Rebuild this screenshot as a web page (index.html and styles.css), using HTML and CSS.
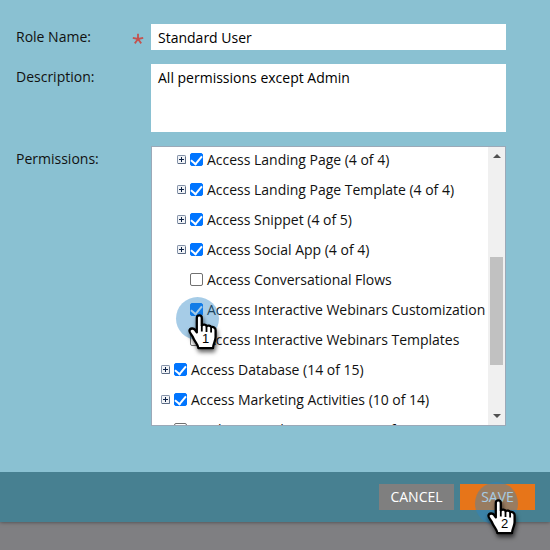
FILE: index.html
```
<!DOCTYPE html>
<html lang="en">
<head>
<meta charset="utf-8">
<title>Edit Role</title>
<link rel="stylesheet" href="styles.css">
</head>
<body>
<svg class="defs" width="0" height="0">
  <symbol id="plus" viewBox="0 0 9 9">
    <rect x=".5" y=".5" width="8" height="8" rx=".6" fill="#f1f3f6" stroke="#8492a8"/>
    <path d="M1 8.5H8.5V2" fill="none" stroke="#5c6c86"/>
    <path d="M2 4.5H7M4.5 2V7" stroke="#0d2348" stroke-width="1"/>
  </symbol>
  <symbol id="hand" viewBox="0 0 29 39">
    <path d="M8.8 4C8.8 .6 13.8 .6 13.8 4V11.4C15 10 18.2 10.4 18.6 12.2C19.8 11 22.6 11.6 23.2 13.2C25 12.4 27.6 13.6 27.6 16V23C27.6 27.6 25.2 29 25 34.2H10.4C10.2 30.4 6.6 27.8 5.2 23.8C4 20.8 1.4 19 1.4 16.8C1.8 13.8 5.8 14 7 15.8L8.8 18.4Z" fill="#fff" stroke="#000" stroke-width="2.3" stroke-linejoin="round"/>
    <path d="M13.8 11V17.4M18.5 12.4V18M23.1 13.4V18.6" stroke="#000" stroke-width="1.8"/>
  </symbol>
</svg>
<main class="dialog">
  <div class="form">
    <div class="field name">
      <label>Role Name:</label>
      <svg class="required" viewBox="0 0 12 12"><path d="M6 6V.8M6 6L11.2 4.9M6 6L9.2 10.4M6 6L2.8 10.4M6 6L.8 4.9" stroke="#c4524f" stroke-width="1.8"/></svg>
      <div class="input">Standard User</div>
    </div>
    <div class="field description">
      <label>Description:</label>
      <div class="input">All permissions except Admin</div>
    </div>
    <div class="field permissions">
      <label>Permissions:</label>
      <div class="tree">
        <div class="rows">
          <div class="row sub"><svg class="plus"><use href="#plus"/></svg><i class="box on"></i><span>Access Landing Page (4 of 4)</span></div>
          <div class="row sub"><svg class="plus"><use href="#plus"/></svg><i class="box on"></i><span>Access Landing Page Template (4 of 4)</span></div>
          <div class="row sub"><svg class="plus"><use href="#plus"/></svg><i class="box on"></i><span>Access Snippet (4 of 5)</span></div>
          <div class="row sub"><svg class="plus"><use href="#plus"/></svg><i class="box on"></i><span>Access Social App (4 of 4)</span></div>
          <div class="row sub"><b class="plus"></b><i class="box"></i><span>Access Conversational Flows</span></div>
          <div class="row sub"><b class="plus"></b><i class="box on"></i><span>Access Interactive Webinars Customization</span></div>
          <div class="row sub"><b class="plus"></b><i class="box"></i><span>Access Interactive Webinars Templates</span></div>
          <div class="row"><svg class="plus"><use href="#plus"/></svg><i class="box on"></i><span>Access Database (14 of 15)</span></div>
          <div class="row"><svg class="plus"><use href="#plus"/></svg><i class="box on"></i><span>Access Marketing Activities (10 of 14)</span></div>
          <div class="row"><b class="plus"></b><i class="box"></i><span>Workspace Administration (0 of 5)</span></div>
        </div>
        <div class="scrollbar">
          <svg class="arrow" viewBox="0 0 8 4"><path d="M0 4L4 0L8 4Z"/></svg>
          <div class="thumb"></div>
          <svg class="arrow" viewBox="0 0 8 4"><path d="M0 0L4 4L8 0Z"/></svg>
        </div>
      </div>
    </div>
  </div>
  <footer class="footer">
    <div class="button">CANCEL</div>
    <div class="button save">SAVE</div>
  </footer>
</main>
<div class="step first"><svg><use href="#hand"/></svg><span>1</span></div>
<div class="step second"><svg><use href="#hand"/></svg><span>2</span></div>
</body>
</html>
```
FILE: styles.css
```
* { box-sizing: border-box; }
body { margin: 0; width: 550px; height: 550px; overflow: hidden; position: relative; background: #7f7f82; font: 14px/20px "Open Sans", sans-serif; color: #111; }
.defs { position: absolute; }
.dialog { height: 522px; background: #8ac1d2; display: flex; flex-direction: column; box-shadow: 0 0 4px rgba(0, 0, 0, .5); }
.form { height: 472px; padding: 24px 0 0 16px; display: flex; flex-direction: column; }
.field { display: flex; }
.field label { width: 116px; padding-top: 3px; }
.name { height: 26px; margin-bottom: 14px; }
.required { width: 12px; height: 12px; margin: 9px 7px 0 0; }
.description { height: 68px; margin-bottom: 14px; }
.description label, .permissions label { width: 135px; }
.input { width: 355px; background: #fff; padding: 4px 7px; color: #000; }
.permissions { height: 280px; }
.tree { width: 355px; height: 280px; border: 1px solid #9ba9b8; background: #fff; display: flex; overflow: hidden; color: #111; letter-spacing: -.015px; }
.rows { flex: 1; margin-top: -2px; }
.row { height: 30px; display: flex; align-items: center; padding-left: 9px; white-space: nowrap; }
.sub { padding-left: 25px; }
.plus { width: 9px; height: 9px; margin: 0 4px 1px 0; flex: none; }
.box { width: 13px; height: 13px; border: 1px solid #707070; border-radius: 2px; background: #fff; margin: 0 4px 1px 0; flex: none; display: flex; justify-content: center; }
.box.on { background: #0075ff; border-color: #0075ff; }
.box.on::after { content: ""; width: 5px; height: 9px; border: solid #fff; border-width: 0 2px 2px 0; transform: translateY(-.5px) rotate(40deg); }
.scrollbar { width: 17px; background: #f0f0f0; display: flex; flex-direction: column; align-items: center; padding: 7px 0; }
.arrow { width: 8px; height: 4px; fill: #505050; }
.thumb { width: 13px; height: 108px; background: #c1c1c1; margin: 99px 0 49px; flex: none; }
.footer { height: 50px; background: #478091; display: flex; justify-content: flex-end; gap: 6px; padding: 12px 15px 0 0; }
.button { width: 75px; height: 26px; background: #7f7f7f; color: #fff; text-align: center; line-height: 26px; }
.save { background: #e77519; }
.step { position: absolute; width: 43px; height: 43px; border-radius: 50%; background: rgba(42, 134, 198, .42); }
.first { left: 176px; top: 297px; }
.second { left: 475px; top: 482px; }
.step svg { position: absolute; left: 12px; top: 17px; width: 29px; height: 39px; overflow: visible; filter: drop-shadow(1px 3px 2px rgba(0, 0, 0, .6)); }
.step span { position: absolute; left: 26px; top: 34px; font: 13px/16px "Liberation Sans", sans-serif; color: #000; }
```
